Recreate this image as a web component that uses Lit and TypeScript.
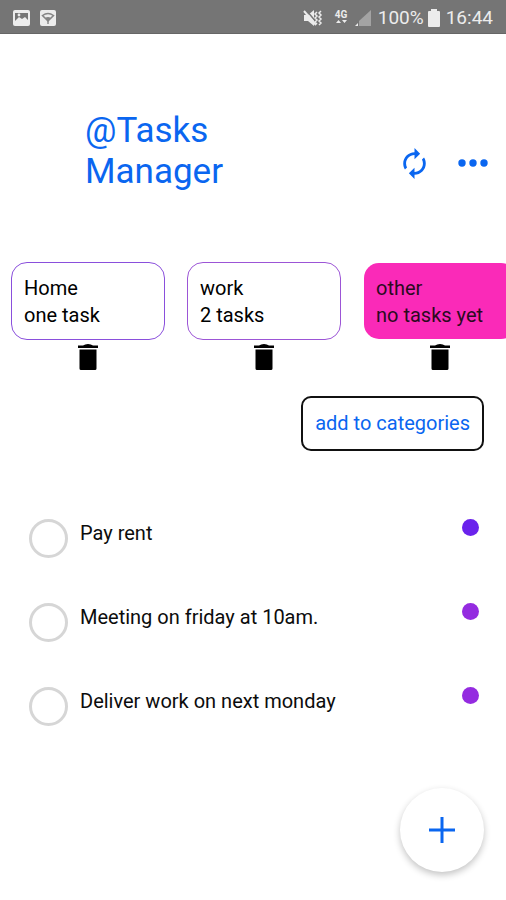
import { LitElement, html, css, svg } from "lit";
import { customElement, property, state } from "lit/decorators.js";
import { classMap } from "lit/directives/class-map.js";
import { styleMap } from "lit/directives/style-map.js";

interface Category {
  name: string;
  count: string;
  color: string;
  filled?: boolean;
}

interface Task {
  id: string;
  title: string;
  color: string;
  done: boolean;
}

@customElement("status-bar")
class StatusBar extends LitElement {
  static styles = css`
    :host {
      display: flex;
      align-items: center;
      justify-content: space-between;
      box-sizing: border-box;
      height: 34px;
      padding: 3px 13px 0 12px;
      border-bottom: 1px solid #666;
      background: #757575;
      color: #ececec;
      font-size: 19px;
      line-height: 24px;
    }
    .group {
      display: flex;
      align-items: center;
    }
    .left {
      gap: 8px;
    }
    svg {
      display: block;
    }
    .mute {
      margin-right: 10px;
    }
    .net {
      margin-right: 5px;
    }
    .signal {
      margin-right: 6px;
    }
    .battery {
      margin: 0 6px 0 4px;
    }
  `;

  render() {
    return html`
      <div class="group left">
        <svg width="19" height="18" viewBox="0 0 19 18" aria-hidden="true">
          <rect x="1" y="1" width="17" height="16" rx="2" fill="#ececec" />
          <path d="M3 4h13v7l-3-3-3 2-3-2-4 4z" fill="#757575" />
          <circle cx="7" cy="6" r="1.4" fill="#ececec" />
        </svg>
        <svg width="18" height="18" viewBox="0 0 18 18" aria-hidden="true">
          <rect x="1" y="1" width="16" height="16" rx="2" fill="#ececec" />
          <path d="M3.5 6.5Q9 2.5 14.5 6.5L9 12z" fill="none" stroke="#858585" stroke-width="1.5" />
          <path d="M6 9Q9 7 12 9L9 12zM8.300 11h1.400v4H8.300z" fill="#858585" />
        </svg>
      </div>
      <div class="group">
        <svg class="mute" width="20" height="20" viewBox="0 0 20 20" aria-hidden="true">
          <path d="M1 7h4l6-5v16l-6-5H1z" fill="#ececec" />
          <path d="M3 2l11 13" stroke="#757575" stroke-width="1.5" />
          <path d="M1 3l12 14" stroke="#ececec" stroke-width="2" />
          <path d="M14 4l-2 2 2 2-2 2 2 2-2 2 2 2M18 3l-2 2 2 2-2 2 2 2-2 2 2 2-2 2" fill="none" stroke="#ececec" stroke-width="1.5" />
        </svg>
        <svg class="net" width="16" height="20" viewBox="0 0 16 20" aria-label="4G">
          <text x="8" y="10" text-anchor="middle" font-family="Roboto, sans-serif" font-size="10" font-weight="700" fill="#ececec">4G</text>
          <path d="M3 15l2.5-3 2.5 3zM9 12h5l-2.500 3z" fill="#ececec" />
        </svg>
        <svg class="signal" width="18" height="18" viewBox="0 0 18 18" aria-hidden="true">
          <path d="M5 17V12L17 1v16z" fill="#a3a3a3" />
          <path d="M1 17l3-3v3z" fill="#ececec" />
        </svg>
        <span>100%</span>
        <svg class="battery" width="12" height="18" viewBox="0 0 12 18" aria-hidden="true">
          <path d="M3 0h6v2h2q1 0 1 1v14q0 1-1 1H1q-1 0-1-1V3q0-1 1-1h2z" fill="#ececec" />
        </svg>
        <span>16:44</span>
      </div>
    `;
  }
}

@customElement("category-card")
class CategoryCard extends LitElement {
  @property({ attribute: false }) category!: Category;

  static styles = css`
    :host {
      display: flex;
      flex: none;
      flex-direction: column;
      align-items: center;
      gap: 4px;
      width: 154px;
    }
    button {
      margin: 0;
      border: 0;
      background: none;
      color: inherit;
      font: inherit;
      cursor: pointer;
    }
    .card {
      box-sizing: border-box;
      width: 100%;
      padding: 12px 12px 10px;
      border: 1px solid;
      border-radius: 16px;
      text-align: left;
      white-space: nowrap;
    }
    .line {
      display: block;
      color: #000;
      line-height: 27px;
    }
    .filled .line {
      color: #2b0a20;
    }
    .delete {
      padding: 0;
    }
    svg {
      display: block;
    }
  `;

  render() {
    const { name, count, color, filled } = this.category;
    const paint = filled
      ? { background: `${color} padding-box`, borderColor: "transparent" }
      : { borderColor: color };
    return html`
      <button class=${classMap({ card: true, filled: !!filled })} style=${styleMap(paint)}>
        <span class="line">${name}</span>
        <span class="line">${count}</span>
      </button>
      <button class="delete" aria-label="Delete ${name}">
        <svg width="20" height="26" viewBox="0 0 20 26">
          <path d="M0 1.5h5q2-1.5 5-1.5t5 1.5h5V4H0zM1.5 5.500h17v19q0 1.500-1.500 1.500H3q-1.500 0-1.500-1.500z" />
        </svg>
      </button>
    `;
  }
}

@customElement("task-row")
class TaskRow extends LitElement {
  @property({ attribute: false }) task!: Task;

  static styles = css`
    :host {
      display: flex;
      align-items: flex-start;
      gap: 12px;
    }
    .check {
      appearance: none;
      flex: none;
      box-sizing: border-box;
      width: 39px;
      height: 39px;
      margin: 0;
      border: 3px solid #d6d6d6;
      border-radius: 50%;
      background: #fff;
      cursor: pointer;
    }
    .check:checked {
      background: #d6d6d6;
    }
    .title {
      flex: 1;
      line-height: 28px;
    }
    .dot {
      flex: none;
      width: 17px;
      height: 17px;
      border-radius: 50%;
    }
  `;

  render() {
    const { id, title, color, done } = this.task;
    return html`
      <input class="check" type="checkbox" id=${id} .checked=${done} />
      <label class="title" for=${id}>${title}</label>
      <span class="dot" style=${styleMap({ background: color })}></span>
    `;
  }
}

@customElement("app-root")
class AppRoot extends LitElement {
  @state() private categories: Category[] = [
    { name: "Home", count: "one task", color: "#8a4fdc" },
    { name: "work", count: "2 tasks", color: "#9c55d6" },
    { name: "other", count: "no tasks yet", color: "#fa2ab8", filled: true },
  ];

  @state() private tasks: Task[] = [
    { id: "rent", title: "Pay rent", color: "#6a22ec", done: false },
    { id: "meeting", title: "Meeting on friday at 10am.", color: "#942be0", done: false },
    { id: "deliver", title: "Deliver work on next monday", color: "#942be0", done: false },
  ];

  static styles = css`
    :host {
      display: block;
      min-height: 100vh;
      background: #fff;
      color: #0c0c0c;
      font-family: Roboto, "Liberation Sans", sans-serif;
      font-size: 20px;
    }
    button {
      margin: 0;
      padding: 0;
      border: 0;
      background: none;
      color: #0a66f0;
      font: inherit;
      cursor: pointer;
    }
    svg {
      display: block;
    }
    .header {
      display: flex;
      align-items: flex-end;
      justify-content: space-between;
      padding: 76px 17px 0 85px;
    }
    .title {
      width: 160px;
      margin: 0;
      color: #0a66f0;
      font-size: 35px;
      font-weight: 400;
      line-height: 41px;
    }
    .actions {
      display: flex;
      align-items: center;
      gap: 31px;
      height: 58px;
    }
    .categories {
      display: flex;
      gap: 22px;
      margin-top: 70px;
      padding: 0 11px;
      overflow-x: auto;
      scrollbar-width: none;
    }
    .tools {
      display: flex;
      justify-content: flex-end;
      padding: 26px 22px 0;
    }
    .add {
      padding: 12px;
      border: 2px solid #111;
      border-radius: 10px;
      line-height: 27px;
    }
    .tasks {
      display: flex;
      flex-direction: column;
      gap: 45px;
      padding: 68px 27px 120px 29px;
    }
    .fab {
      position: fixed;
      right: 22px;
      bottom: 28px;
      display: grid;
      place-items: center;
      width: 84px;
      height: 84px;
      border-radius: 50%;
      background: #fff;
      box-shadow: 0 3px 7px rgba(0, 0, 0, 0.24);
    }
  `;

  render() {
    return html`
      <status-bar></status-bar>
      <header class="header">
        <h1 class="title">@Tasks Manager</h1>
        <div class="actions">
          <button aria-label="Refresh">
            <svg width="23" height="31" viewBox="4 1 16 22" fill="currentColor">
              <path d="M12 6v3l4-4-4-4v3c-4.420 0-8 3.580-8 8 0 1.570.46 3.030 1.240 4.260L6.700 14.800c-.45-.83-.7-1.790-.7-2.800 0-3.310 2.690-6 6-6zm6.760 1.740L17.300 9.200c.44.84.7 1.790.7 2.800 0 3.310-2.690 6-6 6v-3l-4 4 4 4v-3c4.420 0 8-3.580 8-8 0-1.570-.46-3.030-1.240-4.260z" />
            </svg>
          </button>
          <button aria-label="More options">
            <svg width="32" height="8" viewBox="0 0 32 8" fill="currentColor">
              ${[5, 16, 27].map((x) => svg`<circle cx=${x} cy="4" r="3.7" />`)}
            </svg>
          </button>
        </div>
      </header>
      <section class="categories">
        ${this.categories.map((c) => html`<category-card .category=${c}></category-card>`)}
      </section>
      <div class="tools">
        <button class="add">add to categories</button>
      </div>
      <section class="tasks">
        ${this.tasks.map((t) => html`<task-row .task=${t}></task-row>`)}
      </section>
      <button class="fab" aria-label="New task">
        <svg width="26" height="26" viewBox="0 0 26 26" fill="none" stroke="currentColor" stroke-width="3">
          <path d="M13 0v26M0 13h26" />
        </svg>
      </button>
    `;
  }
}
